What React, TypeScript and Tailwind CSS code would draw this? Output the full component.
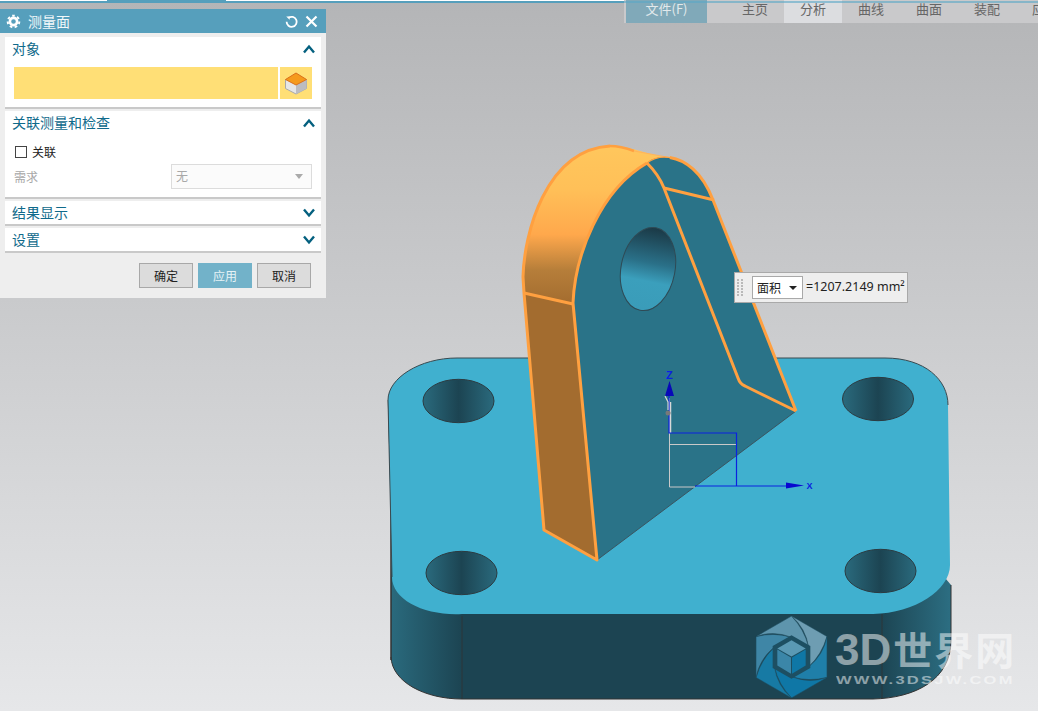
import React from 'react';

function Chevron({ up }: { up?: boolean }) {
  return (
    <svg width="14" height="10" viewBox="0 0 14 10" fill="none" stroke="#04607f" strokeWidth="2.4">
      <path d={up ? 'M2 8.5 7 2.5l5 6' : 'M2 1.5l5 6 5-6'} />
    </svg>
  );
}

function SectionHead({ title, up }: { title: string; up?: boolean }) {
  return (
    <div className="flex h-[24px] items-center justify-between pl-[7px] pr-[5px] text-[14px] leading-[22px] text-[#0f6a8b]">
      <span className="-mt-[2px]">{title}</span>
      <Chevron up={up} />
    </div>
  );
}

function Button({ label, active }: { label: string; active?: boolean }) {
  return (
    <div
      className={
        active
          ? 'flex h-[25px] w-[54px] items-center justify-center bg-[#72b2c9] text-[12px] text-[#e6f2f6]'
          : 'flex h-[25px] w-[54px] items-center justify-center border border-[#a8a8a8] bg-[#dcdcdc] text-[12px] text-[#222]'
      }
    >
      {label}
    </div>
  );
}

function Panel() {
  return (
    <div className="absolute left-0 top-[9px] flex h-[289px] w-[326px] flex-col bg-[#eeeeee]">
      <div className="flex h-[24px] items-center justify-between bg-[#569fbc] pl-[6px] pr-[8px] text-[14px] text-[#f2f8fa]">
        <div className="flex items-center gap-[7px]">
          <svg width="15" height="15" viewBox="0 0 15 15" fill="none" stroke="#fff">
            <circle cx="7.5" cy="7.5" r="3.6" strokeWidth="2.6" />
            <circle cx="7.5" cy="7.5" r="5.8" strokeWidth="2" strokeDasharray="2.6 2.46" />
          </svg>
          <span>测量面</span>
        </div>
        <div className="flex items-center gap-[7px]">
          <svg width="13" height="13" viewBox="0 0 13 13" fill="none" stroke="#fff" strokeWidth="1.8">
            <path d="M3.6 2.8A5 5 0 1 1 1.6 6.8" />
            <path d="M1.2 1.6h3.4v3.2z" fill="#fff" stroke="none" />
          </svg>
          <svg width="13" height="13" viewBox="0 0 13 13" fill="none" stroke="#fff" strokeWidth="2.2">
            <path d="M1.5 1.5l10 10M11.5 1.5l-10 10" />
          </svg>
        </div>
      </div>

      <div className="mx-[5px] mt-[4px] flex flex-col gap-[2px]">
        <div className="h-[72px] border-b-2 border-[#c9c9c9] bg-white">
          <SectionHead title="对象" up />
          <div className="ml-[9px] mt-[6px] flex gap-[2px]">
            <div className="h-[32px] w-[264px] bg-[#ffdf76]" />
            <div className="flex h-[32px] w-[32px] items-center justify-center bg-[#ffdf76]">
              <svg width="24" height="24" viewBox="0 0 24 24">
                <path d="M1.5 8.5v9L12 23l10.5-5.500v-9z" fill="#e6e6e6" stroke="#a9a9a9" />
                <path d="M12 14v9l10.5-5.500v-9z" fill="#bcbcc0" />
                <path d="M12 2 1.5 8.500 12 14l10.5-5.500z" fill="#f59a1c" stroke="#d9701a" />
              </svg>
            </div>
          </div>
        </div>

        <div className="h-[88px] border-b-2 border-[#c9c9c9] bg-white">
          <SectionHead title="关联测量和检查" up />
          <div className="ml-[10px] mt-[9px] flex h-[16px] items-center gap-[5px] text-[12px] leading-[16px] text-[#222]">
            <div className="h-[12px] w-[12px] border border-[#444]" />
            <span className="-mt-[1px]">关联</span>
          </div>
          <div className="ml-[9px] mt-[4px] flex items-center justify-between pr-[9px] text-[12px] text-[#a8a8a8]">
            <span>需求</span>
            <div className="flex h-[25px] w-[141px] items-center justify-between border border-[#dcdcdc] bg-[#fbfbfb] pl-[4px] pr-[8px]">
              <span className="-mt-[1px]">无</span>
              <span className="h-0 w-0 border-x-[4px] border-t-[5px] border-x-transparent border-t-[#aaa]" />
            </div>
          </div>
        </div>

        <div className="h-[25px] border-b-2 border-[#c9c9c9] bg-white">
          <SectionHead title="结果显示" />
        </div>
        <div className="h-[25px] border-b-2 border-[#c9c9c9] bg-white">
          <SectionHead title="设置" />
        </div>
      </div>

      <div className="ml-[139px] mt-[10px] flex gap-[5px]">
        <Button label="确定" />
        <Button label="应用" active />
        <Button label="取消" />
      </div>
    </div>
  );
}

function MenuBar() {
  const tabs = ['主页', '分析', '曲线', '曲面', '装配'];
  return (
    <div className="absolute left-[624px] right-0 top-0 flex h-[23px] overflow-hidden bg-[#c9c9cb] pl-[2px] text-[13px] leading-[17px] text-[#666]">
      <div className="mr-[19px] flex h-[23px] w-[81px] shrink-0 items-start justify-center bg-[#80a9b9] text-[#e2e9ec]">文件(F)</div>
      {tabs.map((t, i) => (
        <div key={t} className={i === 1 ? 'h-[23px] w-[58px] shrink-0 bg-[#dcdde0] pl-[16px]' : 'h-[23px] w-[58px] shrink-0 pl-[16px]'}>
          {t}
        </div>
      ))}
      <div className="h-[23px] w-[23px] shrink-0 overflow-hidden whitespace-nowrap pl-[16px]">应</div>
    </div>
  );
}

function Measure() {
  return (
    <div className="absolute left-[734px] top-[272px] flex h-[31px] w-[174px] items-center border border-[#a9a9a9] bg-[#eeeeee] text-[12px] text-[#222]">
      <div className="ml-[2px] grid w-[7px] grid-cols-2 gap-x-[1px] gap-y-[1px]">
        {Array.from({ length: 12 }).map((_, i) => (
          <span key={i} className="h-[2px] w-[2px] bg-[#b9b9b9]" />
        ))}
      </div>
      <div className="ml-[8px] flex h-[23px] w-[51px] items-center justify-between border border-[#a9a9a9] bg-white pl-[4px] pr-[5px]">
        <span>面积</span>
        <span className="h-0 w-0 border-x-[4px] border-t-[4px] border-x-transparent border-t-[#222]" />
      </div>
      <span className="ml-[3px] whitespace-nowrap font-['Noto_Sans'] text-[12.5px]">=1207.2149 mm²</span>
    </div>
  );
}

function Model() {
  return (
    <svg className="absolute left-0 top-0" width="1038" height="711" viewBox="0 0 1038 711" fill="none">
      <defs>
        <linearGradient id="side" gradientUnits="userSpaceOnUse" x1="391" y1="0" x2="951" y2="0">
          <stop offset="0" stopColor="#2a6a7d" />
          <stop offset="0.127" stopColor="#1c4452" />
          <stop offset="0.873" stopColor="#1c4452" />
          <stop offset="1" stopColor="#2c6e82" />
        </linearGradient>
        <linearGradient id="bore" x1="0" y1="0" x2="1" y2="0">
          <stop offset="0" stopColor="#2a6a7d" />
          <stop offset="0.5" stopColor="#1c4452" />
          <stop offset="1" stopColor="#2a6a7d" />
        </linearGradient>
        <linearGradient id="eyeBore" gradientUnits="userSpaceOnUse" x1="0" y1="228" x2="0" y2="310">
          <stop offset="0" stopColor="#1b3a47" />
          <stop offset="0.42" stopColor="#2a7088" />
          <stop offset="0.65" stopColor="#3b9fbc" />
          <stop offset="1" stopColor="#3a9cb9" />
        </linearGradient>
        <linearGradient id="rim" gradientUnits="userSpaceOnUse" x1="0" y1="150" x2="0" y2="304">
          <stop offset="0" stopColor="#ffc65c" />
          <stop offset="0.25" stopColor="#ffc058" />
          <stop offset="0.55" stopColor="#ffa84c" />
          <stop offset="0.78" stopColor="#b67e3a" />
          <stop offset="1" stopColor="#a36c2f" />
        </linearGradient>
      </defs>

      {/* base plate */}
      <path d="M391 560V657C392 682 425 699 462 699H873C915 698 951 680 951 640V585L930 560Z" fill="url(#side)" />
      <path d="M391 657C392 682 425 699 462 699H873C915 698 951 680 951 640V585" stroke="#333" />
      <path d="M462 616V699M882 614V698" stroke="#333" strokeWidth="0.8" />
      <path d="M388.500 400 391 490V660" stroke="#333" strokeWidth="1.5" />
      <path
        d="M457 358H885C925 358 948 380 948 405L950 565C950 590 915 613 873 614H462C425 616 392 600 392 577L388 400C388 378 420 358 457 358Z"
        fill="#40b0cf"
      />
      <path d="M392 577 388 400C388 378 420 358 457 358H885C925 358 948 380 948 405" stroke="#3a4a50" />
      <ellipse cx="458.500" cy="401" rx="35.500" ry="21.700" fill="url(#bore)" stroke="#2b3a40" />
      <ellipse cx="461.500" cy="573" rx="35.500" ry="21.700" fill="url(#bore)" stroke="#2b3a40" />
      <ellipse cx="878" cy="399" rx="35.500" ry="21.700" fill="url(#bore)" stroke="#2b3a40" />
      <ellipse cx="880.500" cy="571" rx="35.500" ry="21.700" fill="url(#bore)" stroke="#2b3a40" />

      {/* lug */}
      <path d="M523 277C524 235 545 150 610 146C630 146 650 155 672 159L648 165C610 185 575 250 574 304L524 293Z" fill="url(#rim)" />
      <path d="M524 293 573 304 597 560 544 530Z" fill="#a36c2f" />
      <path d="M573 303C575 255 600 190 647 163C658 152 695 152 713 200L796 411 597 560Z" fill="#2a7388" />
      <path d="M796 411 597 560" stroke="#3b5560" />
      <path d="M610 146C620 146 626 148 634 151" stroke="#ffa040" strokeWidth="2.5" />
      <path d="M634 151 672 158" stroke="#ffb45c" strokeWidth="1.2" />
      <path d="M610 146C545 150 524 235 523 277" stroke="#ffa040" strokeWidth="3" />
      <g stroke="#ffa040" strokeWidth="3" strokeLinejoin="round">
        <path d="M523 277 524 293 544 530 597 560 573 303C575 255 600 190 647 163" />
        <path d="M669.800 157.400C684.600 159.700 702.200 171.200 713 200L796 411" />
        <path d="M524 293 573 304" />
        <path d="M647 163C654 170 660 178 664 188L738 378Q740 384 745 386L796 411" />
        <path d="M664 188 714 200" />
      </g>
      <path d="M647 163C652 159 660 156 670 157.500" stroke="#ffa040" strokeWidth="1.2" />
      <ellipse cx="648" cy="269" rx="27" ry="42" transform="rotate(11 648 269)" fill="url(#eyeBore)" stroke="#2f4a55" />

      {/* wcs triad */}
      <path d="M669.500 398V487H695M669 444.500H736" stroke="#c9c9c9" strokeWidth="1" />
      <path d="M670.500 402V433" stroke="#d8d8d8" strokeWidth="1.5" />
      <path d="M669 392V433H736.500V486M695 486H790" stroke="#0a22e0" strokeWidth="1.2" />
      <path d="M669.500 381 665 396H674Z" fill="#0808b8" />
      <path d="M786 482.500 804 485.500 786 488.500Z" fill="#0808d0" />
      <circle cx="668" cy="413" r="2.500" fill="#77787a" />
      <path d="M665 396l3 6v8" stroke="#d5d5d5" strokeWidth="1.2" />
      <text x="666" y="379" fill="#0a22e0" fontSize="11" fontWeight="700" fontFamily="Liberation Sans">Z</text>
      <text x="806.500" y="488.500" fill="#0a22e0" fontSize="9" fontWeight="700" fontFamily="Liberation Sans">X</text>
    </svg>
  );
}

const blades = ['#6e9db2', '#1f7fa9', '#0f77a6', '#177aa4', '#3f86a6', '#5e95ad'];

function Watermark() {
  return (
    <>
      <svg className="absolute left-[755px] top-[616px]" width="73" height="82" viewBox="0 0 72 81">
        {blades.map((c, i) => (
          <path
            key={c}
            transform={`rotate(${i * 60} 36 40.500)`}
            d="M36 0 71 20.250Q66 38 52.900 50.250L52.900 30.750Q50 12 36 0Z"
            fill={c}
            stroke="#1e4d5f"
            strokeWidth="0.5"
          />
        ))}
        <path d="M36 19 54.600 29.750V51.250L36 62 17.400 51.250V29.750Z" fill="#1d4f62" />
        <path d="M36 24 50 32 36 40 22 32Z" fill="#5a99b4" />
        <path d="M22 33 35.500 41V57L22 49Z" fill="#3b86a8" />
        <path d="M50 33 36.500 41V57L50 49Z" fill="#0f77a6" />
      </svg>
      <div className="absolute left-[835px] top-[626px] flex items-baseline font-['Liberation_Sans'] text-[44px] font-bold leading-[44px] text-white/50">
        <span>3D</span>
        <span className="ml-[2px] font-['Noto_Sans_CJK_SC'] text-[39px] tracking-[2px]">世界网</span>
      </div>
      <div className="absolute left-[836px] top-[674px] origin-left scale-x-150 whitespace-nowrap font-['Liberation_Sans'] text-[11px] font-bold leading-[12px] tracking-[1.5px] text-white/50">
        WWW.3DSJW.COM
      </div>
    </>
  );
}

export default function App() {
  return (
    <div className="relative h-[711px] w-[1038px] overflow-hidden bg-[linear-gradient(to_bottom,#b4b5b7_0%,#e6e7e9_100%)] font-['Noto_Sans_CJK_SC','Liberation_Sans',sans-serif]">
      <Model />
      <Watermark />
      <div className="absolute left-0 right-0 top-0 h-[1px] bg-white" />
      <div className="absolute left-[107px] top-0 h-[1px] w-[119px] bg-[#569fbc]" />
      <div className="absolute left-0 right-0 top-[1px] h-[2px] bg-[#569fbc]" />
      <MenuBar />
      <div className="absolute left-[624px] right-0 top-[1px] h-[2px] bg-[#5aa8c6]/60" />
      <Panel />
      <Measure />
    </div>
  );
}
